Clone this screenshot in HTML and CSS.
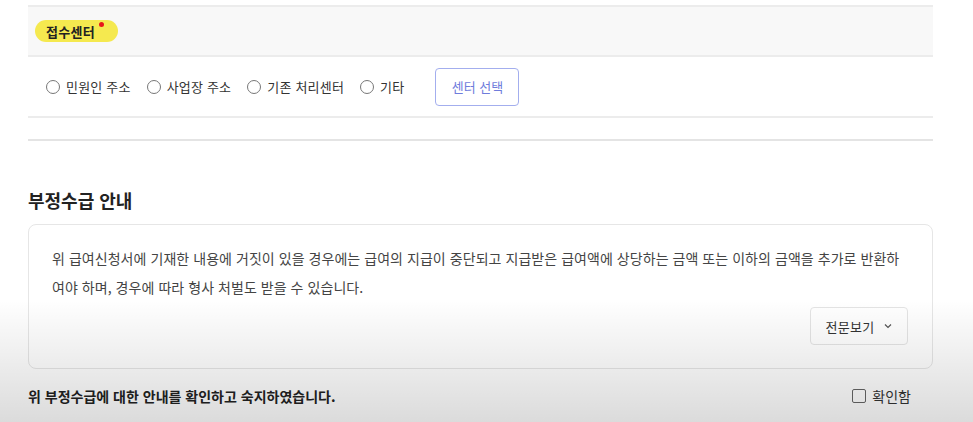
FILE: index.html
```html
<!DOCTYPE html>
<html lang="ko">
<head>
    <meta charset="utf-8">
    <link rel="stylesheet" href="styles.css">
</head>
<body>
<div class="page">
    <div class="formTable">
        <div class="labelRow">
            <span class="badge">접수센터<i class="required"></i></span>
        </div>
        <div class="radioRow">
            <label class="radio"><span class="circle"></span>민원인 주소</label>
            <label class="radio"><span class="circle"></span>사업장 주소</label>
            <label class="radio"><span class="circle"></span>기존 처리센터</label>
            <label class="radio"><span class="circle"></span>기타</label>
            <button class="centerButton">센터 선택</button>
        </div>
        <div class="emptyRow"></div>
    </div>

    <h2 class="sectionTitle">부정수급 안내</h2>
    <div class="noticeBox">
        <p class="noticeText">위 급여신청서에 기재한 내용에 거짓이 있을 경우에는 급여의 지급이 중단되고 지급받은 급여액에 상당하는 금액 또는 이하의 금액을 추가로 반환하여야 하며, 경우에 따라 형사 처벌도 받을 수 있습니다.</p>
        <div class="noticeFoot">
            <button class="moreButton">전문보기
                <svg width="10" height="10" viewBox="0 0 10 10"><path d="M2 3.5 L5 6.5 L8 3.5" fill="none" stroke="#555" stroke-width="1.2"/></svg>
            </button>
        </div>
    </div>
    <div class="agreeRow">
        <span class="agreeText">위 부정수급에 대한 안내를 확인하고 숙지하였습니다.</span>
        <label class="check"><span class="box"></span>확인함</label>
    </div>
</div>
<div class="shade"></div>
</body>
</html>
```

FILE: styles.css
```css
body {
    margin: 0;
    background-color: white;
    font-family: "Noto Sans CJK KR", "Noto Sans", sans-serif;
    color: #333;
    height: 422px;
    overflow: hidden;
}
.page {
    width: 905px;
    padding: 5px 0 0 28px;
}
.formTable {
    border-top: 2px solid #ececec;
}
.labelRow {
    background-color: #f8f8f8;
    height: 48px;
    border-bottom: 2px solid #ececec;
    display: flex;
    align-items: center;
    padding-left: 7px;
}
.badge {
    background-color: #f5e94f;
    border-radius: 12px;
    height: 22px;
    padding: 0 23px 0 11px;
    font-size: 13px;
    font-weight: bold;
    color: #222;
    letter-spacing: 0.3px;
    display: flex;
    align-items: center;
    position: relative;
}
.required {
    position: absolute;
    right: 14px;
    top: 2px;
    width: 5px;
    height: 5px;
    border-radius: 50%;
    background-color: #e8161a;
}
.radioRow {
    height: 59px;
    border-bottom: 2px solid #ececec;
    display: flex;
    align-items: center;
    padding-left: 18px;
}
.radio {
    display: flex;
    align-items: center;
    font-size: 13px;
    color: #333;
    letter-spacing: 0.2px;
    margin-right: 16px;
}
.circle {
    width: 12px;
    height: 12px;
    border: 1px solid #777;
    border-radius: 50%;
    margin-right: 6px;
}
.centerButton {
    margin-left: 15px;
    width: 84px;
    height: 38px;
    background: white;
    border: 1px solid #a3aeee;
    border-radius: 4px;
    color: #6f7cdc;
    font-family: inherit;
    font-size: 13px;
}
.emptyRow {
    height: 21px;
    border-bottom: 2px solid #e4e4e4;
}
.sectionTitle {
    margin: 47px 0 12px 0;
    font-size: 18px;
    font-weight: bold;
    color: #222;
    line-height: 24px;
}
.noticeBox {
    border: 1px solid #e6e6e6;
    border-radius: 8px;
    padding: 19px 24px 22px 23px;
    height: 102px;
}
.noticeText {
    margin: 0;
    font-size: 14px;
    letter-spacing: 0.05px;
    word-break: break-all;
    line-height: 29px;
    color: #444;
}
.noticeFoot {
    display: flex;
    justify-content: flex-end;
    margin-top: 5px;
}
.moreButton {
    width: 98px;
    height: 38px;
    background: white;
    border: 1px solid #e4e4e4;
    border-radius: 4px;
    font-family: inherit;
    font-size: 13px;
    letter-spacing: 0.3px;
    color: #333;
    display: flex;
    align-items: center;
    justify-content: center;
    gap: 8px;
}
.agreeRow {
    display: flex;
    justify-content: space-between;
    align-items: center;
    margin-top: 17px;
    padding-right: 22px;
}
.agreeText {
    font-size: 14px;
    font-weight: bold;
    color: #222;
}
.check {
    display: flex;
    align-items: center;
    font-size: 14px;
    color: #333;
}
.box {
    width: 12px;
    height: 12px;
    border: 1px solid #666;
    border-radius: 2px;
    margin-right: 6px;
}
.shade {
    position: absolute;
    left: 0;
    right: 0;
    top: 300px;
    height: 122px;
    background: linear-gradient(rgba(0,0,0,0), rgba(0,0,0,0.14));
    pointer-events: none;
}
```
